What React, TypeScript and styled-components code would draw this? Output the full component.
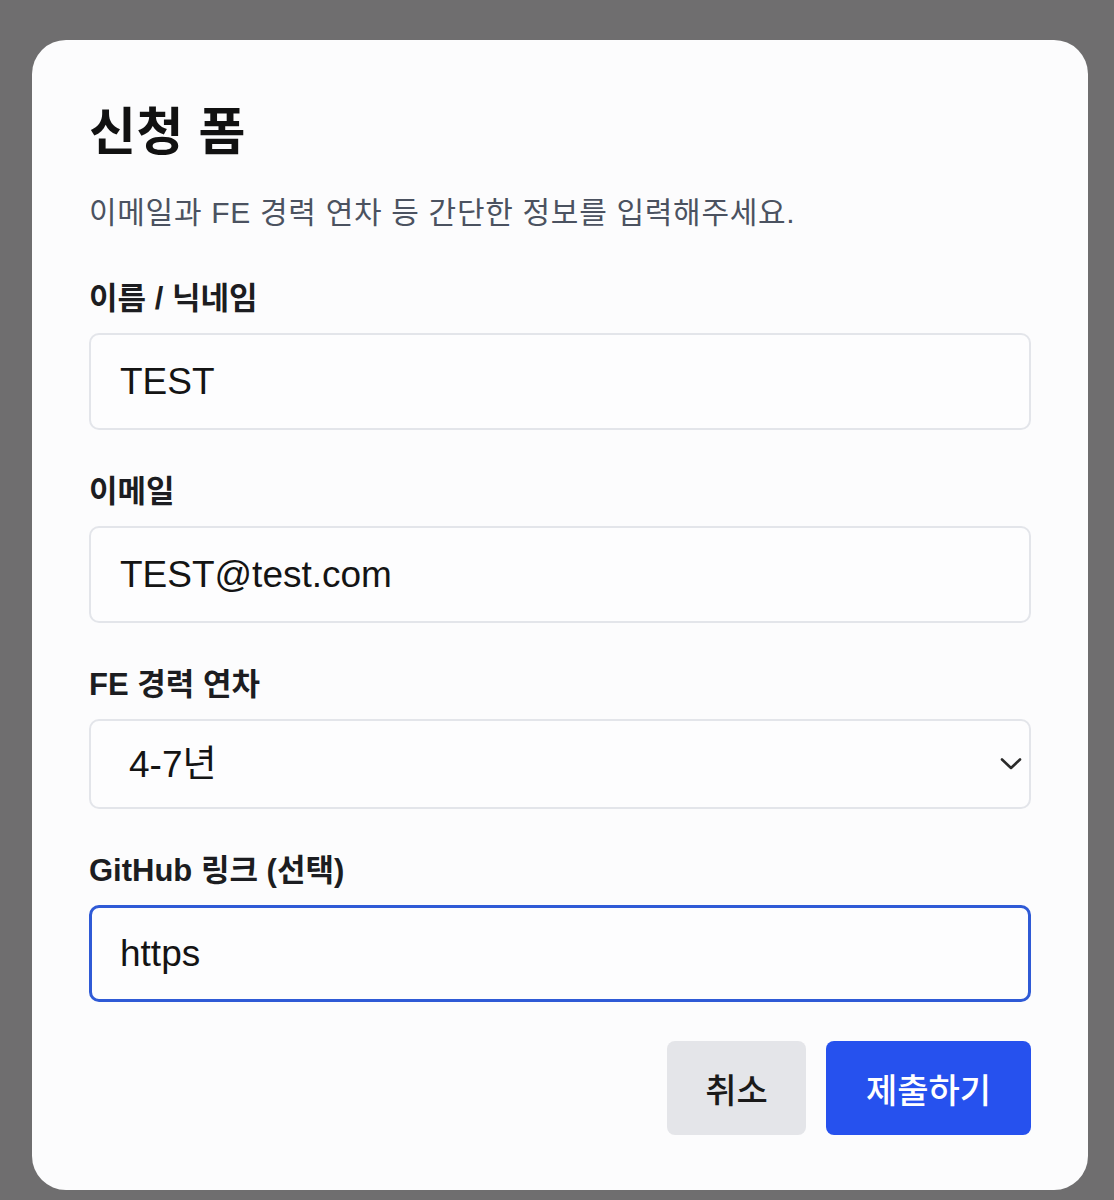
import React from "react";
import styled, { createGlobalStyle } from "styled-components";

const GlobalStyle = createGlobalStyle`
  html, body {
    margin: 0;
    padding: 0;
    background: #6f6e6f;
  }
  body {
    font-family: "Liberation Sans", "Noto Sans CJK KR", sans-serif;
    -webkit-font-smoothing: antialiased;
  }
  * { box-sizing: border-box; }
`;

const Page = styled.div`
  min-height: 1200px;
  padding: 40px 0 10px 32px;
`;

const Card = styled.form`
  width: 1056px;
  background: #fcfcfd;
  border-radius: 34px;
  padding: 63px 57px 55px 57px;
  display: flex;
  flex-direction: column;
`;

const Title = styled.h1`
  margin: 0;
  font-size: 51px;
  line-height: 60px;
  font-weight: 700;
  color: #111111;
  letter-spacing: 0.5px;
`;

const Subtitle = styled.p`
  margin: 30px 0 48px 0;
  font-size: 30px;
  line-height: 40px;
  color: #4b5260;
  font-weight: 400;
  letter-spacing: 0.7px;
`;

const Fields = styled.div`
  display: flex;
  flex-direction: column;
  gap: 44px;
`;

const Field = styled.label`
  display: flex;
  flex-direction: column;
  gap: 16px;
`;

const LabelText = styled.span`
  font-size: 31px;
  line-height: 36px;
  font-weight: 600;
  color: #1c1d21;
`;

const TextInput = styled.input<{ $active?: boolean }>`
  width: 100%;
  height: 97px;
  margin: 0;
  border-radius: 10px;
  border: ${(p) => (p.$active ? "3px solid #2f5ad6" : "2px solid #e3e5ea")};
  background: #fdfdfe;
  padding: 0 ${(p) => (p.$active ? "28px" : "29px")};
  font-family: "Liberation Sans", "Noto Sans CJK KR", sans-serif;
  font-size: 37px;
  color: #141414;
  outline: none;
  caret-color: #111;
`;

const SelectWrap = styled.div`
  position: relative;
  width: 100%;
`;

const Select = styled.select`
  appearance: none;
  -webkit-appearance: none;
  width: 100%;
  height: 90px;
  margin: 0;
  border-radius: 10px;
  border: 2px solid #e3e5ea;
  background: #fdfdfe;
  padding: 0 40px 0 38px;
  font-family: "Liberation Sans", "Noto Sans CJK KR", sans-serif;
  font-size: 37px;
  color: #141414;
  outline: none;
`;

const Chevron = styled.svg`
  position: absolute;
  right: 9px;
  top: 38px;
  width: 22px;
  height: 14px;
  pointer-events: none;
`;

const Actions = styled.div`
  display: flex;
  justify-content: flex-end;
  gap: 20px;
  margin-top: 39px;
`;

const Button = styled.button<{ $primary?: boolean }>`
  height: 94px;
  padding: 0;
  width: ${(p) => (p.$primary ? "205px" : "139px")};
  border: none;
  border-radius: 8px;
  background: ${(p) => (p.$primary ? "#2651ee" : "#e4e5e9")};
  color: ${(p) => (p.$primary ? "#ffffff" : "#1a1a1a")};
  font-family: "Liberation Sans", "Noto Sans CJK KR", sans-serif;
  font-size: 34px;
  font-weight: 500;
  cursor: pointer;
`;

export default function App() {
  return (
    <Page>
      <GlobalStyle />
      <Card onSubmit={(e) => e.preventDefault()}>
        <Title>신청 폼</Title>
        <Subtitle>이메일과 FE 경력 연차 등 간단한 정보를 입력해주세요.</Subtitle>
        <Fields>
          <Field>
            <LabelText>이름 / 닉네임</LabelText>
            <TextInput defaultValue="TEST" />
          </Field>
          <Field>
            <LabelText>이메일</LabelText>
            <TextInput defaultValue="TEST@test.com" />
          </Field>
          <Field>
            <LabelText>FE 경력 연차</LabelText>
            <SelectWrap>
              <Select defaultValue="4-7">
                <option value="0-1">0-1년</option>
                <option value="1-3">1-3년</option>
                <option value="4-7">4-7년</option>
                <option value="8+">8년 이상</option>
              </Select>
              <Chevron viewBox="0 0 22 14" fill="none">
                <path
                  d="M2 2.5 L11 11 L20 2.5"
                  stroke="#2a2a2a"
                  strokeWidth="2.6"
                  strokeLinecap="round"
                  strokeLinejoin="round"
                />
              </Chevron>
            </SelectWrap>
          </Field>
          <Field>
            <LabelText>GitHub 링크 (선택)</LabelText>
            <TextInput $active defaultValue="https" autoFocus />
          </Field>
        </Fields>
        <Actions>
          <Button type="button">취소</Button>
          <Button type="submit" $primary>
            제출하기
          </Button>
        </Actions>
      </Card>
    </Page>
  );
}
